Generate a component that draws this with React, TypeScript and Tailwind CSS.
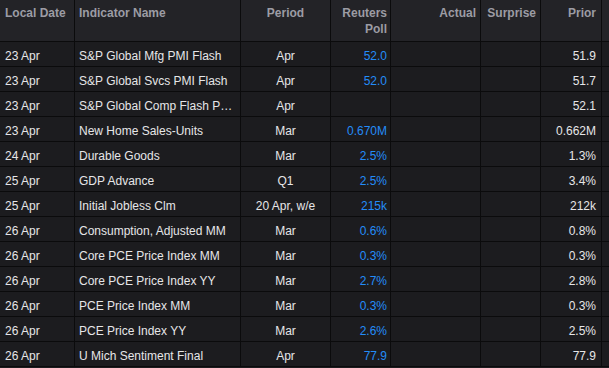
import React from "react";

type Row = {
  date: string;
  name: string;
  period: string;
  poll: string;
  actual: string;
  surprise: string;
  prior: string;
};

const rows: Row[] = [
  { date: "23 Apr", name: "S&P Global Mfg PMI Flash", period: "Apr", poll: "52.0", actual: "", surprise: "", prior: "51.9" },
  { date: "23 Apr", name: "S&P Global Svcs PMI Flash", period: "Apr", poll: "52.0", actual: "", surprise: "", prior: "51.7" },
  { date: "23 Apr", name: "S&P Global Comp Flash PMI", period: "Apr", poll: "", actual: "", surprise: "", prior: "52.1" },
  { date: "23 Apr", name: "New Home Sales-Units", period: "Mar", poll: "0.670M", actual: "", surprise: "", prior: "0.662M" },
  { date: "24 Apr", name: "Durable Goods", period: "Mar", poll: "2.5%", actual: "", surprise: "", prior: "1.3%" },
  { date: "25 Apr", name: "GDP Advance", period: "Q1", poll: "2.5%", actual: "", surprise: "", prior: "3.4%" },
  { date: "25 Apr", name: "Initial Jobless Clm", period: "20 Apr, w/e", poll: "215k", actual: "", surprise: "", prior: "212k" },
  { date: "26 Apr", name: "Consumption, Adjusted MM", period: "Mar", poll: "0.6%", actual: "", surprise: "", prior: "0.8%" },
  { date: "26 Apr", name: "Core PCE Price Index MM", period: "Mar", poll: "0.3%", actual: "", surprise: "", prior: "0.3%" },
  { date: "26 Apr", name: "Core PCE Price Index YY", period: "Mar", poll: "2.7%", actual: "", surprise: "", prior: "2.8%" },
  { date: "26 Apr", name: "PCE Price Index MM", period: "Mar", poll: "0.3%", actual: "", surprise: "", prior: "0.3%" },
  { date: "26 Apr", name: "PCE Price Index YY", period: "Mar", poll: "2.6%", actual: "", surprise: "", prior: "2.5%" },
  { date: "26 Apr", name: "U Mich Sentiment Final", period: "Apr", poll: "77.9", actual: "", surprise: "", prior: "77.9" },
];

const grid =
  "grid grid-cols-[75px_166px_90px_60px_90px_60px_61px_1fr] border-b border-[#0b0b0c]";
const cell = "border-r border-[#0b0b0c] overflow-hidden whitespace-nowrap";

export default function App() {
  return (
    <div
      className="w-[609px] h-[368px] bg-[#1c1c1f] text-[12px] overflow-hidden"
      style={{ fontFamily: '"Liberation Sans", Arial, sans-serif' }}
    >
      {/* Header */}
      <div className={`${grid} h-[42px] bg-[#232327] font-bold text-[#9c9ca4] leading-[16px]`}>
        <div className={`${cell} pl-[5px] pt-[5px]`}>Local Date</div>
        <div className={`${cell} pl-[4px] pt-[5px]`}>Indicator Name</div>
        <div className={`${cell} text-center pt-[5px]`}>Period</div>
        <div className={`${cell} text-right pr-[3px] pt-[5px] whitespace-normal`}>
          Reuters
          <br />
          Poll
        </div>
        <div className={`${cell} text-right pr-[4px] pt-[5px]`}>Actual</div>
        <div className={`${cell} text-right pr-[4px] pt-[5px]`}>Surprise</div>
        <div className={`${cell} text-right pr-[5px] pt-[5px]`}>Prior</div>
        <div />
      </div>

      {/* Rows */}
      {rows.map((r, i) => (
        <div key={i} className={`${grid} h-[25px] text-[#e6e6e8] leading-[17px]`}>
          <div className={`${cell} pl-[5px] pt-[6px]`}>{r.date}</div>
          <div className={`${cell} pl-[4px] pr-[7px] pt-[6px] truncate`}>{r.name}</div>
          <div className={`${cell} text-center pt-[6px]`}>{r.period}</div>
          <div className={`${cell} text-right pr-[3px] pt-[6px] text-[#248cf8]`}>{r.poll}</div>
          <div className={`${cell} text-right pr-[4px] pt-[6px]`}>{r.actual}</div>
          <div className={`${cell} text-right pr-[4px] pt-[6px]`}>{r.surprise}</div>
          <div className={`${cell} text-right pr-[5px] pt-[6px]`}>{r.prior}</div>
          <div />
        </div>
      ))}
    </div>
  );
}
